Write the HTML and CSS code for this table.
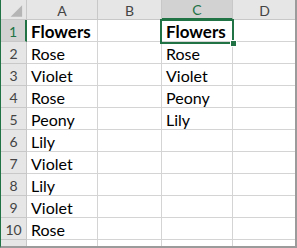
FILE: index.html
```html
<!DOCTYPE html>
<html>
<head>
<meta charset="utf-8">
<link rel="stylesheet" href="styles.css">
</head>
<body>
<div class="sheet">
  <div class="grid">
    <div class="corner"><svg width="26" height="20" viewBox="0 0 26 20"><polygon points="22,5 22,17 10,17" fill="#b5b5b5"/></svg></div>
    <div class="colhead">A</div>
    <div class="colhead">B</div>
    <div class="colhead sel">C</div>
    <div class="colhead last">D</div>

    <div class="rowhead sel">1</div>
    <div class="cell bold">Flowers</div><div class="cell"></div><div class="cell bold">Flowers</div><div class="cell last"></div>

    <div class="rowhead">2</div>
    <div class="cell">Rose</div><div class="cell"></div><div class="cell">Rose</div><div class="cell last"></div>

    <div class="rowhead">3</div>
    <div class="cell">Violet</div><div class="cell"></div><div class="cell">Violet</div><div class="cell last"></div>

    <div class="rowhead">4</div>
    <div class="cell">Rose</div><div class="cell"></div><div class="cell">Peony</div><div class="cell last"></div>

    <div class="rowhead">5</div>
    <div class="cell">Peony</div><div class="cell"></div><div class="cell">Lily</div><div class="cell last"></div>

    <div class="rowhead">6</div>
    <div class="cell">Lily</div><div class="cell"></div><div class="cell"></div><div class="cell last"></div>

    <div class="rowhead">7</div>
    <div class="cell">Violet</div><div class="cell"></div><div class="cell"></div><div class="cell last"></div>

    <div class="rowhead">8</div>
    <div class="cell">Lily</div><div class="cell"></div><div class="cell"></div><div class="cell last"></div>

    <div class="rowhead">9</div>
    <div class="cell">Violet</div><div class="cell"></div><div class="cell"></div><div class="cell last"></div>

    <div class="rowhead">10</div>
    <div class="cell">Rose</div><div class="cell"></div><div class="cell"></div><div class="cell last"></div>

    <div class="rowhead"></div>
    <div class="cell"></div><div class="cell"></div><div class="cell"></div><div class="cell last"></div>
  </div>
  <div class="selection"><span class="handle"></span></div>
</div>
</body>
</html>
```

FILE: styles.css
```css
* { box-sizing: border-box; }
html, body { margin: 0; padding: 0; background: #fff; }
body { width: 297px; height: 248px; overflow: hidden; }

.sheet {
  position: relative;
  width: 297px;
  height: 248px;
  overflow: hidden;
  border-left: 1px solid #217346;
  border-right: 2px solid #9b9b9b;
  border-bottom: 2px solid #9b9b9b;
  font-family: Lato, "Liberation Sans", sans-serif;
}

.grid {
  display: grid;
  grid-template-columns: 26px 71px 64px 71px 63px;
  grid-template-rows: 20px repeat(11, 22px);
}

.corner, .colhead, .rowhead {
  background: #e6e6e6;
  border-right: 1px solid #c8c8c8;
  border-bottom: 1px solid #c8c8c8;
  color: #444;
  font-size: 14px;
  display: flex;
  align-items: center;
  justify-content: center;
}
.corner svg { display: block; }
.colhead { padding-top: 1px; }
.colhead.last { border-right: none; }
.colhead.sel, .rowhead.sel { background: #d2d2d2; color: #217346; }
.colhead.sel { border-bottom: 2px solid #217346; }
.rowhead.sel { border-right: 2px solid #217346; }
.rowhead { font-size: 14px; padding-top: 1px; }

.cell {
  border-right: 1px solid #d4d4d4;
  border-bottom: 1px solid #d4d4d4;
  font-size: 16px;
  color: #000;
  padding: 2px 0 0 4px;
  line-height: 19px;
  white-space: nowrap;
}
.cell.last { border-right: none; }
.cell.bold { font-weight: bold; font-size: 17px; }

.selection {
  position: absolute;
  left: 159px;
  top: 19px;
  width: 74px;
  height: 25px;
  border: 2px solid #217346;
}
.handle {
  position: absolute;
  right: -5px;
  bottom: -5px;
  width: 7px;
  height: 7px;
  background: #217346;
  border: 1px solid #fff;
}
```
